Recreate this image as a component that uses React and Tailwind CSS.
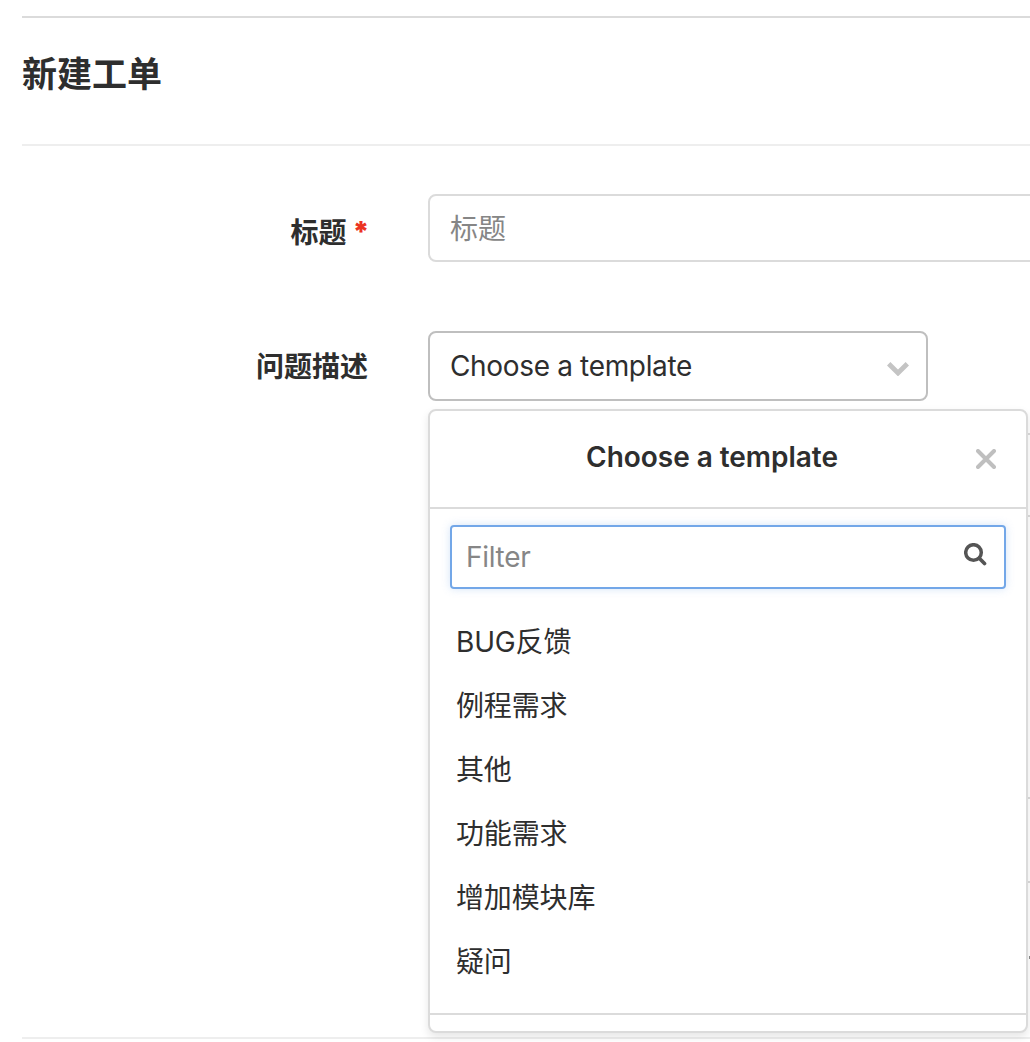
const templates = ['BUG反馈', '例程需求', '其他', '功能需求', '增加模块库', '疑问'];

function ChevronIcon() {
  return (
    <svg className="block h-[14px] w-[22px]" viewBox="0 0 22 14" fill="none">
      <path d="M1.7 1.7 11 11 20.3 1.7" stroke="#c4c4c4" strokeWidth="4.8" />
    </svg>
  );
}

function CloseIcon() {
  return (
    <svg className="block size-5" viewBox="0 0 20 20" fill="none">
      <path d="M2 2 18 18M18 2 2 18" stroke="#bfbfbf" strokeWidth="4" strokeLinecap="round" />
    </svg>
  );
}

function SearchIcon() {
  return (
    <svg className="block size-[23px]" viewBox="0 0 23 23" fill="none">
      <circle cx="9.5" cy="9.5" r="7.8" stroke="#555" strokeWidth="3.5" />
      <path d="m15.3 15.3 5.2 5.2" stroke="#555" strokeWidth="3.7" strokeLinecap="round" />
    </svg>
  );
}

function TemplateMenu() {
  return (
    <div className="absolute top-[78px] left-0 z-10 h-[624px] w-[600px] rounded-lg border-2 border-[#dbdbdb] bg-white shadow-[0_4px_8px_rgba(0,0,0,0.1)]">
      <div className="flex h-[98px] items-center border-b-2 border-[#dbdbdb] pr-[30px] pb-1 pl-[18px]">
        <div className="flex-1 text-center text-[28px] leading-9 font-semibold tracking-[-0.03px]">
          Choose a template
        </div>
        <button className="pt-[3px]" aria-label="Close">
          <CloseIcon />
        </button>
      </div>
      <div className="px-5 pt-4">
        <label className="flex h-16 w-[556px] items-center rounded border-2 border-[#73a7e8] pr-[17px] pl-[14px] shadow-[0_0_8px_rgba(115,167,232,0.3)]">
          <input
            className="min-w-0 flex-1 text-[28px] tracking-[-0.3px] outline-none placeholder:text-[#868686]"
            placeholder="Filter"
          />
          <span className="pb-[5px]">
            <SearchIcon />
          </span>
        </label>
      </div>
      <ul className="pt-[21px] pl-[26px]">
        {templates.map((name) => (
          <li key={name} className="flex h-16 items-center text-[28px] leading-9 tracking-[-0.15px]">
            {name}
          </li>
        ))}
      </ul>
      <div className="mt-[19px] border-t-2 border-[#dbdbdb]" />
    </div>
  );
}

export default function App() {
  return (
    <main className="h-[1042px] overflow-hidden bg-white pt-4 pl-[22px] font-['Inter','Noto_Sans_CJK_SC',sans-serif] text-[#2e2e2e]">
      <header className="flex h-[130px] items-center border-t-2 border-b-2 border-t-[#dbdbdb] border-b-[#eee]">
        <h1 className="pb-[14px] text-[35px] leading-[52px] font-bold">新建工单</h1>
      </header>
      <section className="flex pt-12">
        <div className="flex w-[346px] shrink-0 justify-end gap-1.5 pt-[19px] text-[28px] leading-10 font-bold">
          标题
          <span className="-mt-px font-black tracking-[-1.5px] text-[#ec3323]">*</span>
        </div>
        <div className="ml-[60px] flex h-[68px] w-[640px] shrink-0 rounded-lg border-2 border-[#dbdbdb] pt-px pl-5">
          <input
            className="w-full text-[28px] outline-none placeholder:text-[#868686]"
            placeholder="标题"
          />
        </div>
      </section>
      <section className="flex pt-[69px]">
        <div className="w-[346px] shrink-0 pt-4 text-right text-[28px] leading-10 font-bold">问题描述</div>
        <div className="relative ml-[60px] w-[640px] shrink-0">
          <button className="flex h-[70px] w-[500px] items-center justify-between rounded-lg border-2 border-[#bfbfbf] pr-[17px] pl-5 text-[28px] tracking-[-0.34px]">
            <span>Choose a template</span>
            <span className="pt-[5px]">
              <ChevronIcon />
            </span>
          </button>
          <TemplateMenu />
          <div className="mt-8 h-[450px] rounded-lg border-2 border-[#dbdbdb]">
            <div className="h-[82px] border-b-2 border-[#dbdbdb]" />
            <div className="h-[282px] border-b-2 border-[#dbdbdb]" />
          </div>
          <div className="mt-[73px] ml-[601px] h-[3px] w-1 bg-[#8a8a8a]" />
        </div>
      </section>
      <footer className="mt-[78px] border-t-2 border-[#eee]" />
    </main>
  );
}
